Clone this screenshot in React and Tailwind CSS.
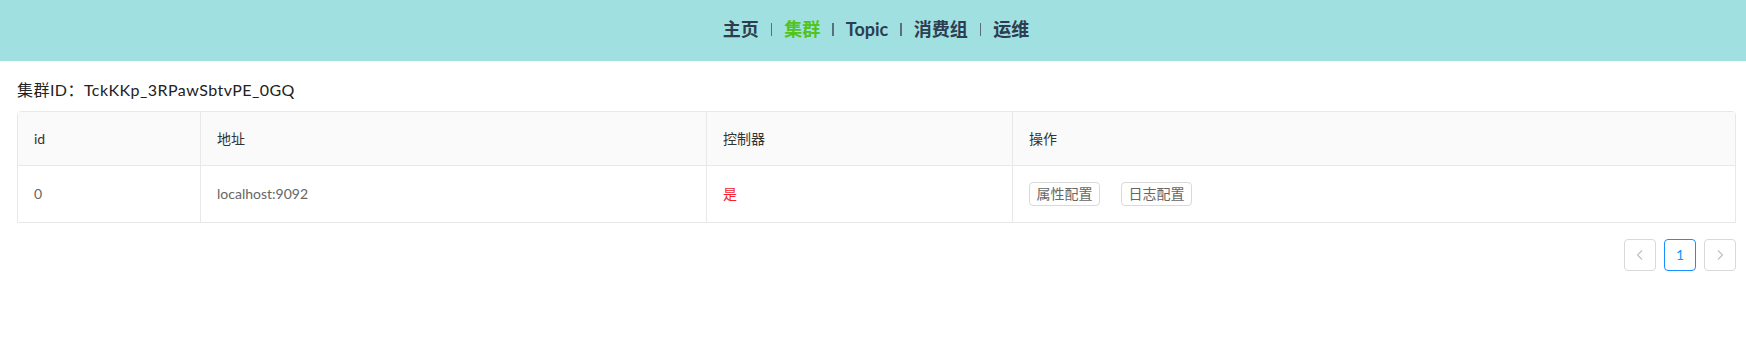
const font = { fontFamily: '"Lato", "Noto Sans CJK SC", sans-serif' };

const navItems = ['主页', '集群', 'Topic', '消费组', '运维'];

function Nav() {
  return (
    <div className="h-[61px] bg-[#a0e0e0] flex items-center justify-center pb-[3px] pl-[6px]">
      <div className="flex items-center text-[18px] font-bold text-[#2c3e50]">
        {navItems.map((item, i) => (
          <div key={item} className="flex items-center">
            {i > 0 && <span className="mx-3 w-[1.5px] h-[13px] bg-[#5a7078]" />}
            <span className={item === '集群' ? 'text-[#52c41a]' : ''}>{item}</span>
          </div>
        ))}
      </div>
    </div>
  );
}

function Pager() {
  return (
    <div className="flex justify-end gap-2 mt-4">
      <button className="w-8 h-8 rounded border border-[#d9d9d9] text-[#bfbfbf] flex items-center justify-center">
        <svg width="12" height="12" viewBox="0 0 12 12" fill="none" stroke="currentColor" strokeWidth="1.1">
          <path d="M8 1.5 3.5 6 8 10.5" />
        </svg>
      </button>
      <button className="w-8 h-8 rounded border border-[#1890ff] text-[#1890ff] text-sm">1</button>
      <button className="w-8 h-8 rounded border border-[#d9d9d9] text-[#bfbfbf] flex items-center justify-center">
        <svg width="12" height="12" viewBox="0 0 12 12" fill="none" stroke="currentColor" strokeWidth="1.1">
          <path d="M4 1.5 8.5 6 4 10.5" />
        </svg>
      </button>
    </div>
  );
}

export default function App() {
  return (
    <div className="min-h-screen bg-white" style={font}>
      <Nav />
      <div className="pl-[17px] pr-[10px]">
        <div className="mt-[17px] mb-[9px] text-[16px] leading-6 text-[#222] tracking-[0.45px]">集群ID：TckKKp_3RPawSbtvPE_0GQ</div>

        <div className="border border-[#e8e8e8] rounded-t-[4px] text-sm">
          <div className="grid grid-cols-[183px_506px_306px_1fr] bg-[#fafafa] border-b border-[#e8e8e8] text-[#333] h-[53px] box-content">
            <div className="px-4 flex items-center border-r border-[#e8e8e8]">id</div>
            <div className="px-4 flex items-center border-r border-[#e8e8e8]">地址</div>
            <div className="px-4 flex items-center border-r border-[#e8e8e8]">控制器</div>
            <div className="px-4 flex items-center">操作</div>
          </div>
          <div className="grid grid-cols-[183px_506px_306px_1fr] text-[#666] h-[56px]">
            <div className="px-4 flex items-center border-r border-[#e8e8e8]">0</div>
            <div className="px-4 flex items-center border-r border-[#e8e8e8]">localhost:9092</div>
            <div className="px-4 flex items-center border-r border-[#e8e8e8] text-[#f5222d]">是</div>
            <div className="px-4 flex items-center gap-[21px]">
              <button className="h-6 w-[71px] rounded border border-[#d9d9d9] text-[#666] text-sm">属性配置</button>
              <button className="h-6 w-[71px] rounded border border-[#d9d9d9] text-[#666] text-sm">日志配置</button>
            </div>
          </div>
        </div>

        <Pager />
      </div>
    </div>
  );
}
